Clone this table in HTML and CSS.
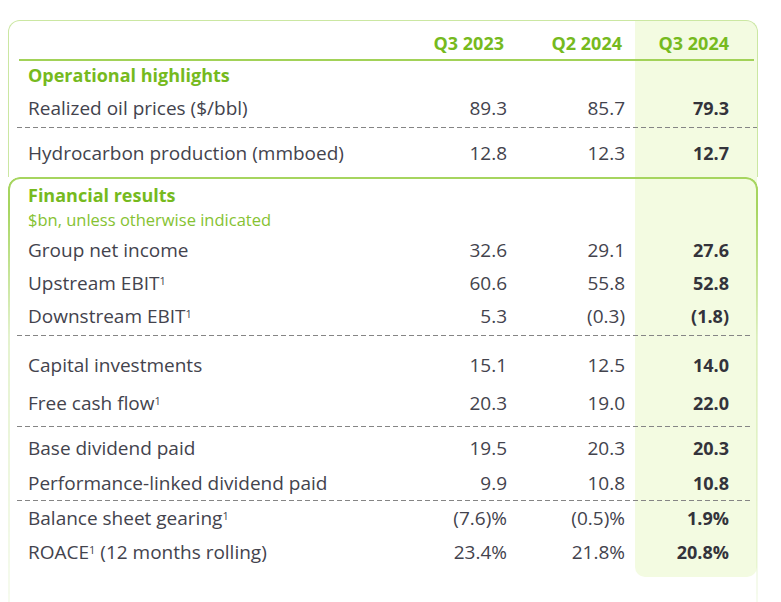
FILE: index.html
```html
<!DOCTYPE html>
<html lang="en">
<head>
<meta charset="utf-8">
<title>Q3 2024 highlights</title>
<link rel="stylesheet" href="styles.css">
</head>
<body>
<div class="panel">
  <div class="band"></div>
  <section class="sec-top">
    <div class="row head">
      <div class="lab"></div>
      <div class="v">Q3 2023</div>
      <div class="v">Q2 2024</div>
      <div class="v v3">Q3 2024</div>
    </div>
    <div class="row sec-title t-op"><div class="lab">Operational highlights</div></div>
    <div class="row r-oil">
      <div class="lab">Realized oil prices ($/bbl)</div>
      <div class="v">89.3</div><div class="v">85.7</div><div class="v v3">79.3</div>
    </div>
    <div class="dash dash-full"></div>
    <div class="row r-hc">
      <div class="lab">Hydrocarbon production (mmboed)</div>
      <div class="v">12.8</div><div class="v">12.3</div><div class="v v3">12.7</div>
    </div>
  </section>
  <section class="sec-fin">
    <div class="row sec-title t-fin"><div class="lab">Financial results</div></div>
    <div class="row subtitle"><div class="lab">$bn, unless otherwise indicated</div></div>
    <div class="group g-a">
      <div class="row h33">
        <div class="lab">Group net income</div>
        <div class="v">32.6</div><div class="v">29.1</div><div class="v v3">27.6</div>
      </div>
      <div class="row h33">
        <div class="lab">Upstream EBIT<sup class="fn">1</sup></div>
        <div class="v">60.6</div><div class="v">55.8</div><div class="v v3">52.8</div>
      </div>
      <div class="row h33">
        <div class="lab">Downstream EBIT<sup class="fn">1</sup></div>
        <div class="v">5.3</div><div class="v">(0.3)</div><div class="v v3">(1.8)</div>
      </div>
    </div>
    <div class="dash"></div>
    <div class="group g-b">
      <div class="row h38">
        <div class="lab">Capital investments</div>
        <div class="v">15.1</div><div class="v">12.5</div><div class="v v3">14.0</div>
      </div>
      <div class="row h38">
        <div class="lab">Free cash flow<sup class="fn">1</sup></div>
        <div class="v">20.3</div><div class="v">19.0</div><div class="v v3">22.0</div>
      </div>
    </div>
    <div class="dash"></div>
    <div class="group g-c">
      <div class="row h35">
        <div class="lab">Base dividend paid</div>
        <div class="v">19.5</div><div class="v">20.3</div><div class="v v3">20.3</div>
      </div>
      <div class="row h35">
        <div class="lab">Performance-linked dividend paid</div>
        <div class="v">9.9</div><div class="v">10.8</div><div class="v v3">10.8</div>
      </div>
    </div>
    <div class="dash"></div>
    <div class="group g-d">
      <div class="row h34">
        <div class="lab">Balance sheet gearing<sup class="fn">1</sup></div>
        <div class="v">(7.6)%</div><div class="v">(0.5)%</div><div class="v v3">1.9%</div>
      </div>
      <div class="row h34">
        <div class="lab">ROACE<sup class="fn">1</sup> (12 months rolling)</div>
        <div class="v">23.4%</div><div class="v">21.8%</div><div class="v v3">20.8%</div>
      </div>
    </div>
  </section>
</div>
</body>
</html>
```

FILE: styles.css
```css
* {
  box-sizing: border-box;
  margin: 0;
  padding: 0;
}

html,
body {
  background: #ffffff;
}

body {
  height: 602px;
  overflow: hidden;
  font-family: "Open Sans", "Liberation Sans", sans-serif;
  font-size: 19px;
  color: #43434d;
}

.panel {
  position: relative;
  z-index: 0;
  width: 750px;
  margin: 20px 0 0 8px;
}

/* highlighted current-quarter column, painted behind the table */
.band {
  position: absolute;
  z-index: -1;
  top: 1px;
  right: 1px;
  width: 122px;
  height: 556px;
  background: #f3fbe1;
  border-radius: 0 11px 10px 10px;
}

.sec-top {
  height: 157px;
  border: 1px solid #cbe7a2;
  border-bottom: 0;
  border-radius: 12px 12px 0 0;
}

.sec-fin {
  position: relative;
  height: 425px;
  padding: 2px 1px 0;
}

.sec-fin::before {
  content: "";
  position: absolute;
  inset: 0;
  border: 2px solid #a6d55f;
  border-bottom: 0;
  border-radius: 12px 12px 0 0;
  -webkit-mask-image: linear-gradient(to bottom, #000 0, #000 30px, rgba(0,0,0,0.3) 160px, rgba(0,0,0,0.1) 100%);
  mask-image: linear-gradient(to bottom, #000 0, #000 30px, rgba(0,0,0,0.3) 160px, rgba(0,0,0,0.1) 100%);
  pointer-events: none;
}

.row {
  display: grid;
  grid-template-columns: 1fr 122px 118px 122px;
  align-items: center;
  line-height: 24px;
  white-space: nowrap;
}

.lab {
  padding-left: 19px;
}

.v {
  text-align: right;
  padding-right: 10px;
}

.v3 {
  padding-right: 28px;
  font-size: 18px;
  font-weight: 700;
  color: #33333b;
}

.head {
  height: 40px;
  align-items: start;
  padding-top: 10px;
  margin: 0 3px 0 10px;
  border-bottom: 2px solid #a2d258;
  font-size: 18px;
  font-weight: 700;
  color: #76ba1e;
}

.head .lab {
  padding-left: 9px;
}

.head .v3 {
  padding-right: 25px;
  color: #76ba1e;
}

.sec-title {
  font-size: 18px;
  font-weight: 700;
  color: #76ba1e;
}

.t-op {
  height: 27px;
  align-items: start;
  padding-top: 2px;
}

.r-oil {
  height: 39px;
}

.r-hc {
  height: 49px;
  align-items: start;
  padding-top: 13px;
}

.t-fin {
  height: 28px;
  align-items: start;
  padding-top: 4px;
}

.subtitle {
  height: 24px;
  align-items: start;
  padding-top: 2px;
  font-size: 16.5px;
  line-height: 22px;
  color: #86c232;
}

.g-a {
  padding: 2px 0 3px;
}

.g-b {
  padding: 10px 0 4px;
}

.g-c {
  padding: 3px 0 0;
}

.h33 { height: 33px; }
.h34 { height: 34px; }
.h35 { height: 35px; }
.h38 { height: 38px; }

.fn {
  font-size: 11px;
  line-height: 0;
  vertical-align: 5px;
}

.dash {
  height: 1px;
  margin: 0 7px 0 8px;
  background: repeating-linear-gradient(90deg, #858585 0 5px, transparent 5px 8px);
}

.dash-full {
  margin-right: 0;
}
```
